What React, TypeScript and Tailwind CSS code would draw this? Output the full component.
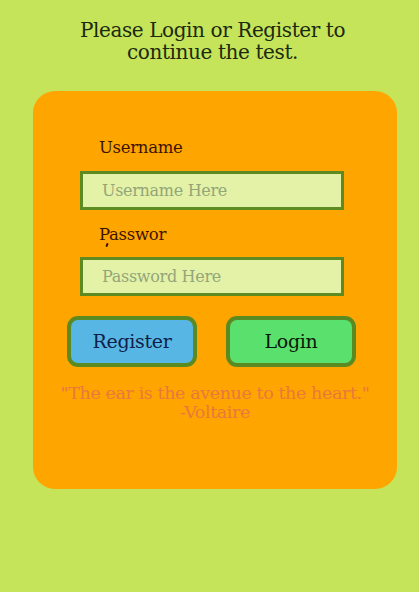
export default function App() {
  return (
    <div
      className="min-h-[592px] w-full bg-[#c5e45a] pt-[19px] text-[#1b2a10]"
      style={{ fontFamily: '"DejaVu Serif", "Liberation Serif", serif' }}
    >
      <h1 className="pl-[6px] text-center text-[20px] leading-[22px] tracking-[-0.4px]">
        Please Login or Register to
        <br />
        continue the test.
      </h1>

      <div className="ml-[33px] mt-[28px] h-[398px] w-[364px] rounded-[22px] bg-[#ffa500] pt-[47px]">
        <div className="pl-[66px] text-[16.5px] leading-[20px] tracking-[-0.3px] text-[#3b1400]">
          Username
        </div>
        <div className="ml-[47px] mt-[13px] flex h-[39px] w-[264px] items-center border-[3px] border-[#5e8a22] bg-[#e3f2a6] pl-[19px] text-[16px] tracking-[-0.3px] text-[#94a57a]">
          Username Here
        </div>

        <div className="relative mt-[15px] pl-[66px] text-[16.5px] leading-[20px] tracking-[-0.3px] text-[#3b1400]">
          Passwor
          <span className="absolute left-[73px] top-[18px] h-[4px] w-[2px] rotate-[20deg] rounded-full bg-[#3b1400]" />
        </div>
        <div className="ml-[47px] mt-[12px] flex h-[39px] w-[264px] items-center border-[3px] border-[#5e8a22] bg-[#e3f2a6] pl-[19px] text-[16px] tracking-[-0.3px] text-[#94a57a]">
          Password Here
        </div>

        <div className="mt-[20px] flex pl-[34px]">
          <button className="h-[51px] w-[130px] rounded-[11px] border-[4.5px] border-[#5a8a22] bg-[#58b6e4] text-[19px] tracking-[-0.3px] text-[#0f1f4a]">
            Register
          </button>
          <button className="ml-[29px] h-[51px] w-[130px] rounded-[11px] border-[4.5px] border-[#5a8a22] bg-[#5ae06c] text-[19px] tracking-[-0.3px] text-[#0a1a0a]">
            Login
          </button>
        </div>

        <p className="mt-[17px] text-center text-[17.5px] leading-[19px] tracking-[-0.4px] text-[#e8793c]">
          "The ear is the avenue to the heart."
          <br />
          -Voltaire
        </p>
      </div>
    </div>
  );
}
